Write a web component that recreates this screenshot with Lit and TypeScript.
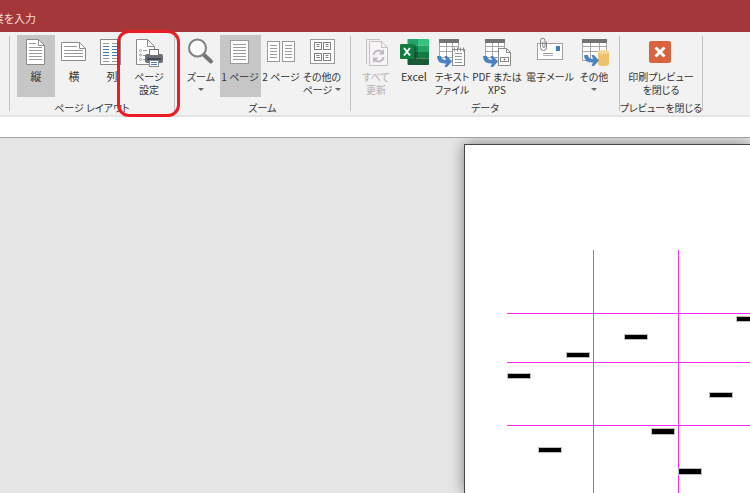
import { LitElement, html, svg, css, nothing } from "lit";
import { customElement } from "lit/decorators.js";
import { classMap } from "lit/directives/class-map.js";

const rows = (x1: number, x2: number, ys: number[], color = "#9a9a9a") =>
  ys.map((y) => svg`<path d="M${x1} ${y + 0.5}H${x2}" stroke=${color} fill="none"/>`);

const arrow = (x: number, y: number) => svg`
  <path transform="translate(${x} ${y})" fill="#4a83bf"
    d="M0 0H4Q4.500 4 9 4L7.500 0H10L15 5.500L10 11H7.500L9 7.500Q0 8 0 0Z"/>`;

const table = (x: number, w: number, h: number) => svg`
  <rect x=${x + 0.5} y="4.5" width=${w - 1} height=${h} fill="#fff" stroke="#a6a6a6"/>
  <path d="M${x} 10.5h${w}M${x} 15.5h${w}M${x + Math.round(w / 3) + 0.5} 6v${h - 2}M${x + Math.round((w * 2) / 3) + 0.5} 6v${h - 2}" stroke="#a6a6a6" fill="none"/>
  <rect x=${x} y="3" width=${w} height="4" fill="#737373"/>`;

const icons: Record<string, unknown> = {
  portrait: svg`
    <path d="M6.5 3.5H18.5L24.5 9.5V28.5H6.5Z" fill="#fff" stroke="#8a8a8a"/>
    <path d="M18.5 3.5V9.5H24.5" fill="none" stroke="#8a8a8a"/>
    ${rows(9, 16, [7])}${rows(9, 22, [11, 14, 17, 20, 23])}`,
  landscape: svg`
    <path d="M3.5 6.5H21.5L27.5 12.5V24.5H3.5Z" fill="#fff" stroke="#8a8a8a"/>
    <path d="M21.5 6.5V12.5H27.5" fill="none" stroke="#8a8a8a"/>
    ${rows(6, 19, [10])}${rows(6, 25, [14, 17, 20])}`,
  columns: svg`
    <rect x="4.5" y="3.5" width="20" height="25" fill="#fff" stroke="#8a8a8a"/>
    ${rows(7, 13, [7, 22, 25])}${rows(16, 22, [7, 22, 25])}
    ${rows(7, 13, [10, 13, 16, 19], "#3f7cc4")}${rows(16, 22, [10, 13, 16, 19], "#3f7cc4")}`,
  setup: svg`
    <path d="M3.5 3.5H14.5L21.5 10.5V28.5H3.5Z" fill="#fff" stroke="#8a8a8a"/>
    <path d="M14.5 3.5V10.5H21.5" fill="none" stroke="#8a8a8a"/>
    <g fill="#fff" stroke="#9a9a9a"><circle cx="7.5" cy="14.5" r="1"/><circle cx="7.5" cy="19" r="1"/><circle cx="7.5" cy="23.5" r="1"/>
    <path d="M10 14.5h4M10 19.5h3M10 23.5h3"/></g>
    <rect x="12" y="18" width="18" height="9" rx="2" fill="#6b6f75"/>
    <rect x="16.5" y="13.5" width="9" height="6" fill="#fff" stroke="#737373"/>
    <rect x="14" y="22" width="14" height="2" fill="#44484e"/>
    <rect x="16.5" y="24.5" width="9" height="6" fill="#fff" stroke="#8a8a8a"/>
    <path d="M18 26.5h6M18 28.5h6" stroke="#3f7cc4"/>`,
  zoom: svg`
    <path d="M18.5 18.5L26 25.5" stroke="#757575" stroke-width="4" stroke-linecap="round"/>
    <circle cx="12.5" cy="12" r="8.5" fill="#fafafa" stroke="#808080" stroke-width="2"/>`,
  one: svg`
    <rect x="6.5" y="4.5" width="18" height="23" fill="#fff" stroke="#9a9a9a"/>
    ${rows(9, 22, [8, 11, 14, 17, 20, 23])}`,
  two: svg`
    <rect x="2.5" y="5.5" width="12" height="20" fill="#fff" stroke="#9a9a9a"/>
    <rect x="17.5" y="5.5" width="12" height="20" fill="#fff" stroke="#9a9a9a"/>
    ${rows(5, 12, [9, 12, 15, 18, 21])}${rows(20, 27, [9, 12, 15, 18, 21])}`,
  many: svg`
    <rect x="4.5" y="3.5" width="24" height="24" fill="#fff" stroke="#9a9a9a"/>
    ${[8.5, 17.5].map((x) => [6.5, 17.5].map((y) => svg`
      <rect x=${x} y=${y} width="7" height="7" fill="#fff" stroke="#808080"/>
      <path d="M${x + 2} ${y + 2}h3M${x + 2} ${y + 4}h3" stroke="#808080"/>`))}`,
  refresh: svg`
    <path d="M6.5 28V3.5H20" fill="none" stroke="#c4c0c4"/>
    <path d="M9.5 5.5H21.5L27.5 11.5V29.5H9.5Z" fill="#f7f4f7" stroke="#c4c0c4"/>
    <path d="M21.5 5.5V11.5H27.5" fill="none" stroke="#c4c0c4"/>
    <path d="M13.5 19A5 5 0 0 1 22 16M23.5 21A5 5 0 0 1 15 24" fill="none" stroke="#bdb9bd" stroke-width="2"/>
    <path d="M24 13V18.5H18.5ZM13 27V21.5H18.5Z" fill="#bdb9bd"/>`,
  excel: svg`
    <path d="M9.5 3H20V9.5H9.5Z" fill="#21a366"/><path d="M20 3H30Q31 3 31 4V9.5H20Z" fill="#33c481"/>
    <path d="M9.5 9.5H20V16H9.5Z" fill="#107c41"/><path d="M20 9.5H31V16H20Z" fill="#21a366"/>
    <path d="M9.5 16H20V22.5H9.5Z" fill="#185c37"/><path d="M20 16H31V22.5H20Z" fill="#107c41"/>
    <path d="M9.5 22.5H31V28Q31 29 30 29H10.5Q9.5 29 9.5 28Z" fill="#185c37"/>
    <rect x="10" y="9" width="8" height="15" fill="#0b4a28" opacity=".5"/>
    <rect x="2" y="8" width="14" height="15" rx="1" fill="#107c41"/>
    <path d="M6 12L12 19.5M12 12L6 19.5" stroke="#fff" stroke-width="2"/>`,
  text: svg`
    ${table(3, 20, 17)}
    <rect x="16.5" y="13.5" width="12" height="16" fill="#fff" stroke="#8a8a8a"/>
    <path d="M18.5 11.5v4M21.5 11.5v4M24.5 11.5v4M27.5 11.5v4" stroke="#8a8a8a"/>
    ${rows(19, 26, [17, 20, 23, 26])}${arrow(1, 20)}`,
  pdf: svg`
    ${table(4, 20, 17)}
    <path d="M17.5 12.5H25.5L29.5 16.5V29.5H17.5Z" fill="#fff" stroke="#8a8a8a"/>
    <path d="M25.5 12.5V16.5H29.5" fill="none" stroke="#8a8a8a"/>
    <rect x="19.5" y="21.5" width="8" height="4" fill="#fff" stroke="#8a8a8a"/>
    <circle cx="23.5" cy="23.5" r="1" fill="#737373"/>${arrow(2, 20)}`,
  mail: svg`
    <rect x="3.5" y="7.5" width="25" height="16" fill="#fff" stroke="#a0a0a0"/>
    <rect x="22" y="10" width="4" height="5" fill="#3f7cc4"/>
    ${rows(9, 19, [17])}${rows(9, 19, [19], "#b4b4b4")}
    <path d="M12.5 6V11.5A3 3 0 0 1 6.5 11.5V4.5A2.2 2.2 0 0 1 11 4.5V10.5A1 1 0 0 1 8.8 10.5V6" fill="none" stroke="#808080"/>`,
  more: svg`
    ${table(4, 25, 20)}
    <path d="M20 16V28C20 30.7 31 30.7 31 28V16Z" fill="#eec26c"/>
    <ellipse cx="25.5" cy="16" rx="5.5" ry="2" fill="#f7d995"/>${arrow(6, 19)}`,
  close: svg`
    <rect x="4" y="5" width="22" height="22" rx="2" fill="#d9633f"/>
    <path d="M10.5 11.5L19.5 20.5M19.5 11.5L10.5 20.5" stroke="#fff" stroke-width="3"/>`,
};

interface Command {
  icon: string;
  lines: string[];
  size: string;
  on?: boolean;
  off?: boolean;
  large?: boolean;
  menu?: "below" | "inline";
  marked?: boolean;
}

const groups: { title: string; commands: Command[] }[] = [
  {
    title: "ページ レイアウト",
    commands: [
      { icon: "portrait", lines: ["縦"], size: "w38", on: true, large: true },
      { icon: "landscape", lines: ["横"], size: "w38", large: true },
      { icon: "columns", lines: ["列"], size: "w38", large: true },
      { icon: "setup", lines: ["ページ", "設定"], size: "w36", marked: true },
    ],
  },
  {
    title: "ズーム",
    commands: [
      { icon: "zoom", lines: ["ズーム"], size: "w38", menu: "below" },
      { icon: "one", lines: ["1 ページ"], size: "w41", on: true },
      { icon: "two", lines: ["2 ページ"], size: "w41" },
      { icon: "many", lines: ["その他の", "ページ"], size: "w41", menu: "inline" },
    ],
  },
  {
    title: "データ",
    commands: [
      { icon: "refresh", lines: ["すべて", "更新"], size: "w36", off: true },
      { icon: "excel", lines: ["Excel"], size: "w40", large: true },
      { icon: "text", lines: ["テキスト", "ファイル"], size: "w36" },
      { icon: "pdf", lines: ["PDF または", "XPS"], size: "w54" },
      { icon: "mail", lines: ["電子メール"], size: "w52" },
      { icon: "more", lines: ["その他"], size: "w36", menu: "below" },
    ],
  },
  {
    title: "プレビューを閉じる",
    commands: [{ icon: "close", lines: ["印刷プレビュー", "を閉じる"], size: "w68" }],
  },
];

@customElement("ribbon-command")
class RibbonCommand extends LitElement {
  static properties = { command: { attribute: false } };
  declare command: Command;

  static styles = css`
    :host { display: block; position: relative; }
    button {
      display: flex; flex-direction: column; align-items: center;
      box-sizing: border-box; height: 62px; margin: 0; padding: 1px 0 0;
      border: 0; background: none; color: #333;
      font: inherit; line-height: 13px; white-space: nowrap;
      font-feature-settings: inherit;
    }
    .w36 { width: 36px; }
    .w38 { width: 38px; }
    .w40 { width: 40px; }
    .w41 { width: 41px; padding-right: 1px; }
    .w52 { width: 52px; }
    .w54 { width: 54px; }
    .w68 { width: 68px; }
    .on { background: #c6c6c6; }
    .off { color: #b1adb1; }
    .large { font-size: 11px; }
    .icon { flex: none; width: 32px; height: 32px; margin-bottom: 2px; }
    .line { display: flex; align-items: center; gap: 3px; min-height: 13px; }
    .caret { border: 3px solid transparent; border-top-color: #666; border-bottom: 0; }
    .marker {
      position: absolute; inset: -5px -13px -20px -14px; z-index: 1;
      border: 3px solid #ed1c24; border-radius: 12px; pointer-events: none;
    }
  `;

  render() {
    const c = this.command;
    const caret = html`<span class="caret"></span>`;
    return html`
      <button class=${classMap({ [c.size]: true, on: !!c.on, off: !!c.off, large: !!c.large })} ?disabled=${!!c.off}>
        <svg class="icon" viewBox="0 0 32 32" aria-hidden="true">${icons[c.icon]}</svg>
        ${c.lines.map((t, i) => html`<span class="line">${t}${c.menu === "inline" && i === c.lines.length - 1 ? caret : nothing}</span>`)}
        ${c.menu === "below" ? html`<span class="line">${caret}</span>` : nothing}
      </button>
      ${c.marked ? html`<div class="marker"></div>` : nothing}
    `;
  }
}

// Marks on the report page: x, y, height; all are equally wide.
const marks = [
  [230, 67, 4], [118, 85, 4], [60, 103, 4], [1, 124, 4],
  [203, 143, 4], [145, 179, 5], [32, 198, 4], [172, 219, 5],
];

@customElement("report-page")
class ReportPage extends LitElement {
  static styles = css`
    :host {
      display: flex; box-sizing: border-box; padding: 105px 0 0 42px;
      background: #fff; border: 1px solid #444; border-width: 1px 0 0 1px;
      box-shadow: 0 0 14px rgba(0, 0, 0, 0.45);
    }
    .plot { flex: 1; min-width: 0; min-height: 243px; }
  `;

  render() {
    return html`
      <svg class="plot">
        <g fill="#ff2cff" shape-rendering="crispEdges">
          ${[63, 112, 175].map((y) => svg`<rect x="0" y=${y} width="100%" height="1"/>`)}
          ${[86, 171].map((x) => svg`<rect x=${x} y="0" width="1" height="100%"/>`)}
        </g>
        ${marks.map(([x, y, h]) => svg`
          <rect x=${x - 1} y=${y - 1} width="24" height=${h + 2} fill="#bdbdbd"/>
          <rect x=${x} y=${y} width="22" height=${h} fill="#000"/>`)}
      </svg>
    `;
  }
}

@customElement("app-root")
class AppRoot extends LitElement {
  static styles = css`
    :host {
      display: flex; flex-direction: column; min-height: 100vh; overflow: hidden;
      font-family: "Noto Sans CJK JP", sans-serif; font-size: 10px;
      font-feature-settings: "palt"; color: #333; background: #e6e6e6;
    }
    .title { display: flex; align-items: center; height: 32px; padding-top: 4px; box-sizing: border-box; background: #a4373a; color: #f6dede; font-size: 11px; }
    .hint { display: flex; justify-content: flex-end; width: 36px; overflow: hidden; white-space: nowrap; }
    .ribbon { display: flex; padding: 3px 0 0 9px; background: #f3f2f2; border-bottom: 2px solid #e4e4e4; }
    .group { display: flex; flex-direction: column; align-items: center; padding: 0 7px; }
    .commands { display: flex; }
    .caption { margin: 3px -8px 0; line-height: 15px; white-space: nowrap; }
    .rule { width: 1px; margin: 1px 0 4px; background: #c0c0c0; }
    .strip { height: 20px; background: #fff; border-bottom: 1px solid #a0a2a6; }
    .canvas { display: flex; flex: 1; padding: 6px 0 0 calc(62% - 1px); overflow: hidden; }
    .page { flex: 1; min-width: 0; }
  `;

  render() {
    return html`
      <header class="title"><div class="hint">業を入力</div></header>
      <nav class="ribbon">
        <div class="rule"></div>
        ${groups.map((g) => html`
          <section class="group" aria-label=${g.title}>
            <div class="commands">${g.commands.map((c) => html`<ribbon-command .command=${c}></ribbon-command>`)}</div>
            <div class="caption">${g.title}</div>
          </section>
          <div class="rule"></div>`)}
      </nav>
      <div class="strip"></div>
      <main class="canvas"><report-page class="page"></report-page></main>
    `;
  }
}
